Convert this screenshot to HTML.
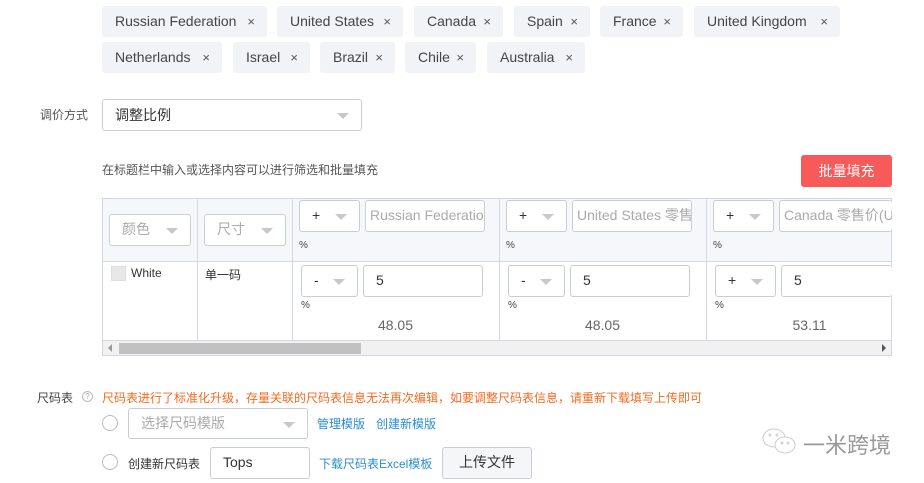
<!DOCTYPE html>
<html><head><meta charset="utf-8"><style>
*{box-sizing:border-box;margin:0;padding:0}
body{width:924px;height:483px;background:#fff;font-family:"Liberation Sans","Noto Sans CJK SC",sans-serif;color:#333;position:relative;overflow:hidden}
.a{position:absolute;white-space:nowrap}
.tag{position:absolute;height:31px;background:#f2f3f6;border-radius:3px;font-size:14px;line-height:31px;padding-left:13px;color:#444}
.tag:after{content:"×";position:absolute;right:12px;color:#555;font-size:13px}
.box{position:absolute;border:1px solid #c9cdd4;border-radius:3px;background:#fff;font-size:14px;line-height:29px;padding-left:12px;white-space:nowrap;overflow:hidden}
.sel:after{content:"";position:absolute;right:12px;top:13px;border-left:6px solid transparent;border-right:6px solid transparent;border-top:6px solid #c8c8c8}
.ph{color:#aaa}
.pct{position:absolute;font-size:10px;color:#444}
.num{position:absolute;font-size:14px;color:#666;width:207px;text-align:center}
.link{color:#2a8ecf;font-size:12px}
.radio{position:absolute;width:16px;height:16px;border:1px solid #bbb;border-radius:50%}
</style></head><body>
<div class="tag" style="left:102px;top:6px;width:165px">Russian Federation</div>
<div class="tag" style="left:277px;top:6px;width:126px">United States</div>
<div class="tag" style="left:414px;top:6px;width:89px">Canada</div>
<div class="tag" style="left:514px;top:6px;width:76px">Spain</div>
<div class="tag" style="left:600px;top:6px;width:83px">France</div>
<div class="tag" style="left:694px;top:6px;width:146px">United Kingdom</div>
<div class="tag" style="left:102px;top:42px;width:120px">Netherlands</div>
<div class="tag" style="left:233px;top:42px;width:77px">Israel</div>
<div class="tag" style="left:320px;top:42px;width:75px">Brazil</div>
<div class="tag" style="left:405px;top:42px;width:71px">Chile</div>
<div class="tag" style="left:487px;top:42px;width:98px">Australia</div>

<div class="a" style="left:40px;top:106px;font-size:12px;color:#555">调价方式</div>
<div class="box sel" style="left:102px;top:99px;width:260px;height:32px;line-height:30px">调整比例</div>

<div class="a" style="left:102px;top:161px;font-size:12px;color:#555">在标题栏中输入或选择内容可以进行筛选和批量填充</div>
<div class="a" style="left:801px;top:155px;width:91px;height:32px;background:#f85a5a;border-radius:3px;color:#fff;font-size:14px;line-height:32px;text-align:center">批量填充</div>

<div class="a" style="left:102px;top:198px;width:790px;height:158px;border:1px solid #d3d8e0;overflow:hidden">
  <div class="a" style="left:0;top:0;width:790px;height:63px;background:#f5f7fa;border-bottom:1px solid #d3d8e0"></div>
  <div class="a" style="left:94px;top:0;width:1px;height:141px;background:#d3d8e0"></div>
  <div class="a" style="left:189px;top:0;width:1px;height:141px;background:#d3d8e0"></div>
  <div class="a" style="left:396px;top:0;width:1px;height:141px;background:#d3d8e0"></div>
  <div class="a" style="left:603px;top:0;width:1px;height:141px;background:#d3d8e0"></div>
  <div class="a" style="left:0;top:141px;width:790px;height:16px;background:#f1f1f1;border-top:1px solid #d3d8e0"></div>
  <div class="a" style="left:16px;top:144px;width:242px;height:11px;background:#c1c1c1"></div>
  <div class="a" style="left:5px;top:145px;border-top:4px solid transparent;border-bottom:4px solid transparent;border-right:4px solid #999"></div>
  <div class="a" style="left:779px;top:145px;border-top:4px solid transparent;border-bottom:4px solid transparent;border-left:4px solid #555"></div>
</div>
<div class="box sel ph" style="left:109px;top:214px;width:82px;height:32px">颜色</div>
<div class="box sel ph" style="left:204px;top:214px;width:82px;height:32px">尺寸</div>

<div class="box sel" style="left:299px;top:200px;width:61px;height:32px">+</div>
<div class="box ph" style="left:365px;top:200px;width:120px;height:32px;padding-left:4px">Russian Federation</div>
<div class="pct" style="left:299px;top:240px">%</div>
<div class="box sel" style="left:506px;top:200px;width:61px;height:32px">+</div>
<div class="box ph" style="left:572px;top:200px;width:120px;height:32px;padding-left:4px">United States 零售价</div>
<div class="pct" style="left:506px;top:240px">%</div>
<div class="box sel" style="left:713px;top:200px;width:61px;height:32px">+</div>
<div class="box ph" style="left:779px;top:200px;width:113px;height:32px;padding-left:4px;border-right:none">Canada 零售价(USD)</div>
<div class="pct" style="left:713px;top:240px">%</div>

<div class="a" style="left:111px;top:266px;width:15px;height:15px;border:1px solid #ddd;background:#e8e8e8"></div>
<div class="a" style="left:131px;top:266px;font-size:12px">White</div>
<div class="a" style="left:205px;top:266px;font-size:12px">单一码</div>

<div class="box sel" style="left:301px;top:265px;width:57px;height:32px">-</div>
<div class="box" style="left:363px;top:265px;width:120px;height:32px">5</div>
<div class="pct" style="left:301px;top:300px">%</div>
<div class="num" style="left:292px;top:317px">48.05</div>
<div class="box sel" style="left:508px;top:265px;width:57px;height:32px">-</div>
<div class="box" style="left:570px;top:265px;width:120px;height:32px">5</div>
<div class="pct" style="left:508px;top:300px">%</div>
<div class="num" style="left:499px;top:317px">48.05</div>
<div class="box sel" style="left:715px;top:265px;width:61px;height:32px">+</div>
<div class="box" style="left:781px;top:265px;width:111px;height:32px;border-right:none">5</div>
<div class="pct" style="left:715px;top:300px">%</div>
<div class="num" style="left:706px;top:317px">53.11</div>

<div class="a" style="left:37px;top:389px;font-size:12px;color:#444">尺码表</div>
<div class="a" style="left:82px;top:391px;width:11px;height:11px;border:1px solid #bbb;border-radius:50%;font-size:8px;line-height:9px;text-align:center;color:#aaa">?</div>
<div class="a" style="left:102px;top:389px;font-size:12px;color:#f56a1e">尺码表进行了标准化升级，存量关联的尺码表信息无法再次编辑，如要调整尺码表信息，请重新下载填写上传即可</div>

<div class="radio" style="left:102px;top:415px"></div>
<div class="box sel ph" style="left:128px;top:408px;width:180px;height:31px">选择尺码模版</div>
<div class="a link" style="left:317px;top:415px">管理模版</div>
<div class="a link" style="left:376px;top:415px">创建新模版</div>

<div class="radio" style="left:102px;top:454px"></div>
<div class="a" style="left:128px;top:455px;font-size:12px">创建新尺码表</div>
<div class="box" style="left:210px;top:447px;width:100px;height:32px">Tops</div>
<div class="a link" style="left:319px;top:455px">下载尺码表Excel模板</div>
<div class="box" style="left:442px;top:447px;width:90px;height:32px;background:#f5f6f8;text-align:center;padding:0">上传文件</div>

<svg class="a" style="left:760px;top:425px" width="40" height="34" viewBox="0 0 40 34" fill="none" stroke="#ccc" stroke-width="1"><ellipse cx="14" cy="13" rx="11" ry="9"/><ellipse cx="25" cy="20" rx="10" ry="8" fill="#fff"/><circle cx="10" cy="10" r="1"/><circle cx="17" cy="10" r="1"/><circle cx="22" cy="18" r="1"/><circle cx="28" cy="18" r="1"/></svg>
<div class="a" style="left:803px;top:428px;font-size:22px;color:#999">一米跨境</div>
</body></html>
